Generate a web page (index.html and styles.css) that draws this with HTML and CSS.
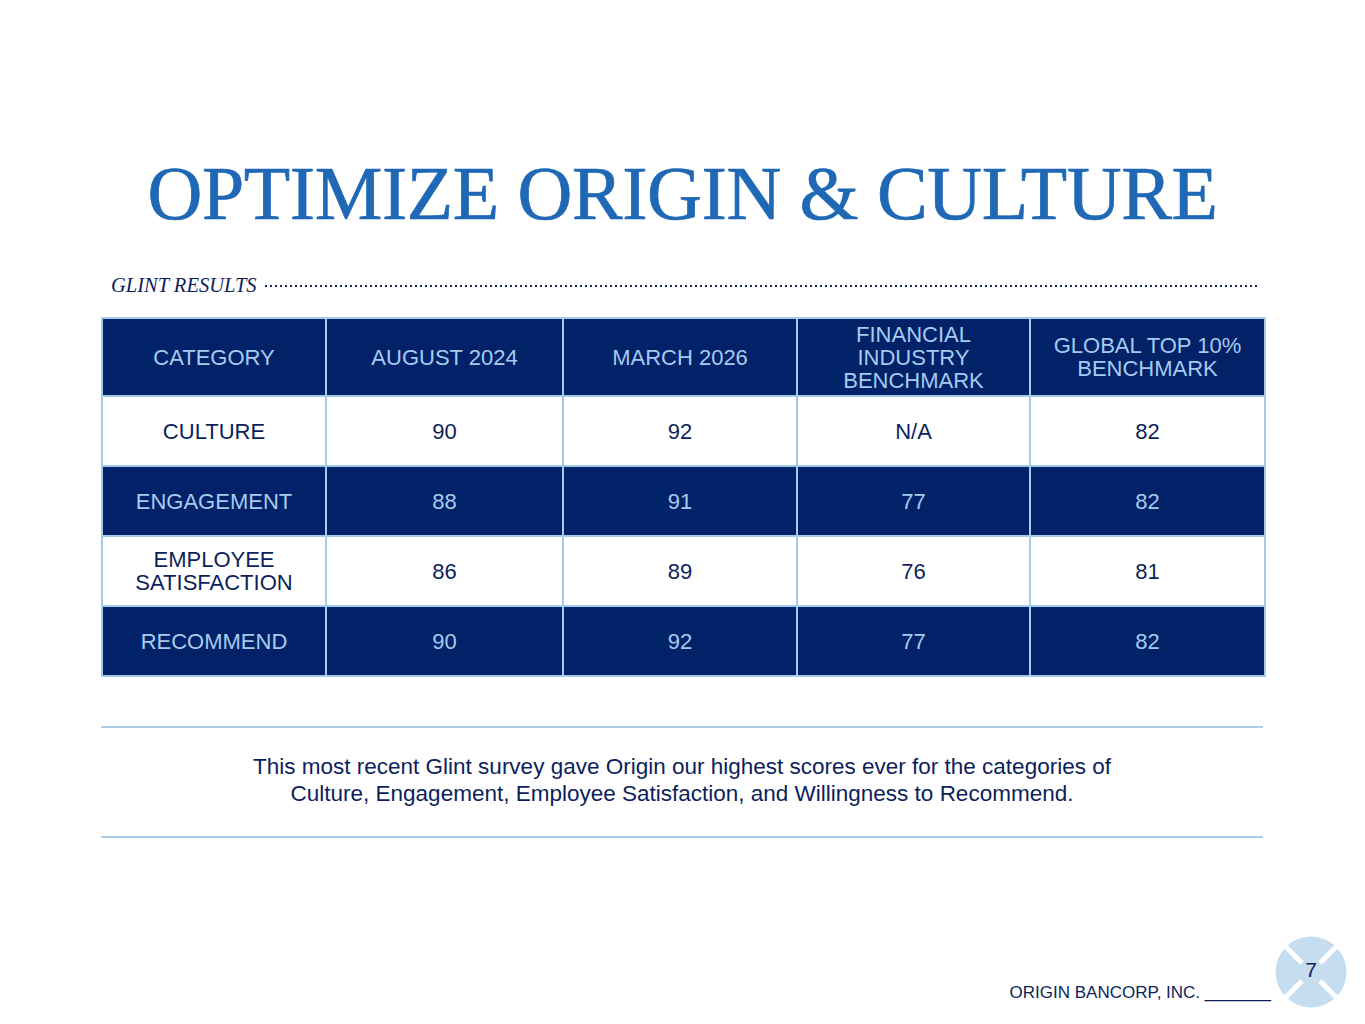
FILE: index.html
```html
<!DOCTYPE html>
<html>
<head>
<meta charset="utf-8">
<link rel="stylesheet" href="styles.css">
</head>
<body>
<div class="slide">
  <h1 class="title">OPTIMIZE ORIGIN &amp; CULTURE</h1>
  <div class="section-head">
    <span class="section-label">GLINT RESULTS</span>
    <span class="dots"></span>
  </div>
  <table class="results">
    <colgroup>
      <col class="c1"><col class="c2"><col class="c3"><col class="c4"><col class="c5">
    </colgroup>
    <tr class="head">
      <td>CATEGORY</td>
      <td>AUGUST 2024</td>
      <td>MARCH 2026</td>
      <td>FINANCIAL<br>INDUSTRY<br>BENCHMARK</td>
      <td>GLOBAL TOP 10%<br>BENCHMARK</td>
    </tr>
    <tr class="light">
      <td>CULTURE</td><td>90</td><td>92</td><td>N/A</td><td>82</td>
    </tr>
    <tr class="dark">
      <td>ENGAGEMENT</td><td>88</td><td>91</td><td>77</td><td>82</td>
    </tr>
    <tr class="light">
      <td>EMPLOYEE<br>SATISFACTION</td><td>86</td><td>89</td><td>76</td><td>81</td>
    </tr>
    <tr class="dark">
      <td>RECOMMEND</td><td>90</td><td>92</td><td>77</td><td>82</td>
    </tr>
  </table>
  <div class="summary">
    <p>This most recent Glint survey gave Origin our highest scores ever for the categories of<br>Culture, Engagement, Employee Satisfaction, and Willingness to Recommend.</p>
  </div>
  <div class="footer">
    <span class="company">ORIGIN BANCORP, INC. _______</span>
    <div class="logo">
      <svg width="72" height="72" viewBox="0 0 72 72">
        <circle cx="36" cy="36" r="35.5" fill="#c6ddf0"/>
        <line x1="6" y1="6" x2="27" y2="27" stroke="#ffffff" stroke-width="5"/>
        <line x1="66" y1="6" x2="45" y2="27" stroke="#ffffff" stroke-width="5"/>
        <line x1="6" y1="66" x2="27" y2="45" stroke="#ffffff" stroke-width="5"/>
        <line x1="66" y1="66" x2="45" y2="45" stroke="#ffffff" stroke-width="5"/>
      </svg>
      <span class="page-num">7</span>
    </div>
  </div>
</div>
</body>
</html>
```
FILE: styles.css
```css
html, body {
  margin: 0;
  padding: 0;
  background: #ffffff;
}
.slide {
  width: 1365px;
  height: 1024px;
  position: relative;
  font-family: "Liberation Sans", Arial, sans-serif;
  overflow: hidden;
}
.title {
  margin: 0;
  padding-top: 150px;
  text-align: center;
  font-family: "Liberation Serif", "Times New Roman", serif;
  font-weight: normal;
  font-size: 76px;
  line-height: 86px;
  color: #1f68b5;
  letter-spacing: -0.4px;
  -webkit-text-stroke: 0.7px #1f68b5;
}
.section-head {
  display: flex;
  align-items: baseline;
  margin: 38px 0 0 111px;
  width: 1147px;
}
.section-label {
  font-family: "Liberation Serif", "Times New Roman", serif;
  font-style: italic;
  font-size: 20.5px;
  color: #0d1f5c;
  white-space: nowrap;
}
.dots {
  flex: 1;
  margin-left: 8px;
  height: 2px;
  background-image: linear-gradient(to right, #1a2a66 0, #1a2a66 2px, transparent 2px, transparent 5px);
  background-size: 5px 2px;
  background-repeat: repeat-x;
  transform: translateY(-5px);
}
.results {
  margin: 20px 0 0 101px;
  width: 1163px;
  border-collapse: collapse;
  table-layout: fixed;
  border: 2px solid #a3cbea;
}
.c1 { width: 224px; }
.c2 { width: 237px; }
.c3 { width: 234px; }
.c4 { width: 233px; }
.c5 { width: 235px; }
.results td {
  border: 2px solid #a3cbea;
  text-align: center;
  vertical-align: middle;
  font-size: 22px;
  line-height: 23px;
  padding: 0;
}
.head td {
  height: 76px;
  background: #012169;
  color: #a6cbef;
}
.light td {
  height: 68px;
  background: #ffffff;
  color: #0d1f5c;
}
.dark td {
  height: 68px;
  background: #012169;
  color: #a6cbef;
}
.summary {
  margin: 49px 0 0 101px;
  width: 1162px;
  border-top: 2px solid #a9d0e8;
  border-bottom: 2px solid #a9d0e8;
  height: 108px;
  box-sizing: content-box;
  display: flex;
  align-items: center;
  justify-content: center;
}
.summary p {
  margin: 0 0 4px 0;
  text-align: center;
  font-size: 22.5px;
  line-height: 27px;
  color: #0d1f5c;
}
.footer {
  position: absolute;
  right: 18px;
  bottom: 16px;
  display: flex;
  align-items: flex-end;
  gap: 4px;
}
.company {
  font-size: 17px;
  color: #0d1f5c;
  margin-bottom: 5px;
}
.logo {
  position: relative;
  width: 72px;
  height: 72px;
}
.logo svg {
  display: block;
}
.page-num {
  position: absolute;
  left: 0;
  right: 0;
  top: 22px;
  text-align: center;
  font-size: 21px;
  color: #0d1f5c;
}
```
